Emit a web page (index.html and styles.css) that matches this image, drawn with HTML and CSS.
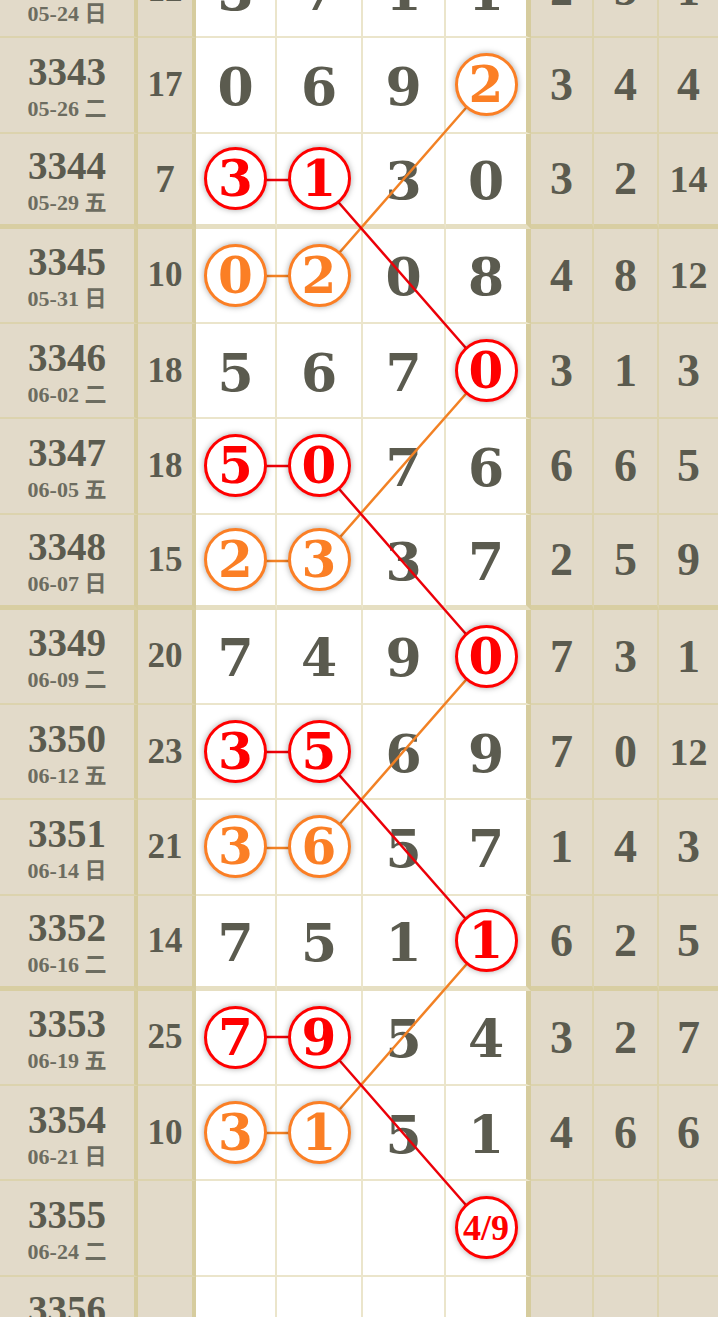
FILE: index.html
```html
<!DOCTYPE html>
<html lang="zh-CN">
<head>
  <meta charset="UTF-8" />
  <meta name="viewport" content="width=device-width, initial-scale=1.0"/>
  <title>走势图</title>
  <link rel="stylesheet" href="styles.css">
</head>
<body>
<div class="chart">
  <div class="row">
    <div class="issue"><b>3342</b><span>05-24 日</span></div>
    <div class="sum">12</div>
    <div class="d">3</div><div class="d">7</div><div class="d">1</div><div class="d">1</div>
    <div class="r">2</div><div class="r">3</div><div class="r">1</div>
  </div>
  <div class="row">
    <div class="issue"><b>3343</b><span>05-26 二</span></div>
    <div class="sum">17</div>
    <div class="d">0</div><div class="d">6</div><div class="d">9</div><div class="d"><i class="ball org">2</i></div>
    <div class="r">3</div><div class="r">4</div><div class="r">4</div>
  </div>
  <div class="row sep">
    <div class="issue"><b>3344</b><span>05-29 五</span></div>
    <div class="sum one">7</div>
    <div class="d"><i class="ball red">3</i></div><div class="d"><i class="ball red">1</i></div><div class="d">3</div><div class="d">0</div>
    <div class="r">3</div><div class="r">2</div><div class="r two">14</div>
  </div>
  <div class="row">
    <div class="issue"><b>3345</b><span>05-31 日</span></div>
    <div class="sum">10</div>
    <div class="d"><i class="ball org">0</i></div><div class="d"><i class="ball org">2</i></div><div class="d">0</div><div class="d">8</div>
    <div class="r">4</div><div class="r">8</div><div class="r two">12</div>
  </div>
  <div class="row">
    <div class="issue"><b>3346</b><span>06-02 二</span></div>
    <div class="sum">18</div>
    <div class="d">5</div><div class="d">6</div><div class="d">7</div><div class="d"><i class="ball red">0</i></div>
    <div class="r">3</div><div class="r">1</div><div class="r">3</div>
  </div>
  <div class="row">
    <div class="issue"><b>3347</b><span>06-05 五</span></div>
    <div class="sum">18</div>
    <div class="d"><i class="ball red">5</i></div><div class="d"><i class="ball red">0</i></div><div class="d">7</div><div class="d">6</div>
    <div class="r">6</div><div class="r">6</div><div class="r">5</div>
  </div>
  <div class="row sep">
    <div class="issue"><b>3348</b><span>06-07 日</span></div>
    <div class="sum">15</div>
    <div class="d"><i class="ball org">2</i></div><div class="d"><i class="ball org">3</i></div><div class="d">3</div><div class="d">7</div>
    <div class="r">2</div><div class="r">5</div><div class="r">9</div>
  </div>
  <div class="row">
    <div class="issue"><b>3349</b><span>06-09 二</span></div>
    <div class="sum">20</div>
    <div class="d">7</div><div class="d">4</div><div class="d">9</div><div class="d"><i class="ball red">0</i></div>
    <div class="r">7</div><div class="r">3</div><div class="r">1</div>
  </div>
  <div class="row">
    <div class="issue"><b>3350</b><span>06-12 五</span></div>
    <div class="sum">23</div>
    <div class="d"><i class="ball red">3</i></div><div class="d"><i class="ball red">5</i></div><div class="d">6</div><div class="d">9</div>
    <div class="r">7</div><div class="r">0</div><div class="r two">12</div>
  </div>
  <div class="row">
    <div class="issue"><b>3351</b><span>06-14 日</span></div>
    <div class="sum">21</div>
    <div class="d"><i class="ball org">3</i></div><div class="d"><i class="ball org">6</i></div><div class="d">5</div><div class="d">7</div>
    <div class="r">1</div><div class="r">4</div><div class="r">3</div>
  </div>
  <div class="row sep">
    <div class="issue"><b>3352</b><span>06-16 二</span></div>
    <div class="sum">14</div>
    <div class="d">7</div><div class="d">5</div><div class="d">1</div><div class="d"><i class="ball red">1</i></div>
    <div class="r">6</div><div class="r">2</div><div class="r">5</div>
  </div>
  <div class="row">
    <div class="issue"><b>3353</b><span>06-19 五</span></div>
    <div class="sum">25</div>
    <div class="d"><i class="ball red">7</i></div><div class="d"><i class="ball red">9</i></div><div class="d">5</div><div class="d">4</div>
    <div class="r">3</div><div class="r">2</div><div class="r">7</div>
  </div>
  <div class="row">
    <div class="issue"><b>3354</b><span>06-21 日</span></div>
    <div class="sum">10</div>
    <div class="d"><i class="ball org">3</i></div><div class="d"><i class="ball org">1</i></div><div class="d">5</div><div class="d">1</div>
    <div class="r">4</div><div class="r">6</div><div class="r">6</div>
  </div>
  <div class="row">
    <div class="issue"><b>3355</b><span>06-24 二</span></div>
    <div class="sum"></div>
    <div class="d"></div><div class="d"></div><div class="d"></div><div class="d"><i class="ball red small">4/9</i></div>
    <div class="r"></div><div class="r"></div><div class="r"></div>
  </div>
  <div class="row">
    <div class="issue"><b>3356</b><span>06-26 五</span></div>
    <div class="sum"></div>
    <div class="d"></div><div class="d"></div><div class="d"></div><div class="d"></div>
    <div class="r"></div><div class="r"></div><div class="r"></div>
  </div>

  <!-- connecting lines, drawn between the ball centres -->
  <svg class="lines" width="718" height="1428" viewBox="0 0 718 1428">
    <g stroke="#f28124" stroke-width="2.5" fill="none">
      <line x1="486" y1="142" x2="319" y2="333"/>
      <line x1="486" y1="428" x2="319" y2="618"/>
      <line x1="486" y1="714" x2="319" y2="905"/>
      <line x1="486" y1="999" x2="319" y2="1190"/>
      <line x1="235.5" y1="333" x2="319" y2="333"/>
      <line x1="235.5" y1="618" x2="319" y2="618"/>
      <line x1="235.5" y1="905" x2="319" y2="905"/>
      <line x1="235.5" y1="1190" x2="319" y2="1190"/>
    </g>
    <g stroke="#ec0008" stroke-width="2.5" fill="none">
      <line x1="319" y1="237" x2="486" y2="428"/>
      <line x1="319" y1="523" x2="486" y2="714"/>
      <line x1="319" y1="809" x2="486" y2="999"/>
      <line x1="319" y1="1094" x2="486" y2="1285"/>
      <line x1="235.5" y1="237" x2="319" y2="237"/>
      <line x1="235.5" y1="523" x2="319" y2="523"/>
      <line x1="235.5" y1="809" x2="319" y2="809"/>
      <line x1="235.5" y1="1094" x2="319" y2="1094"/>
    </g>
  </svg>
</div>
</body>
</html>
```

FILE: styles.css
```css
html, body { margin: 0; overflow: hidden; background: #fff; }
body { font-family: "Liberation Serif", "Noto Sans CJK SC", serif; font-weight: bold; color: #5b5b4f; }

.chart { position: relative; width: 718px; margin-top: -57px; }
.row { display: grid; grid-template-columns: 138px 58px 81px 86px 83px 85px 63px 65px 59px; height: 95.25px; }
.row > div { display: flex; align-items: center; justify-content: center; box-sizing: border-box; border-bottom: 2px solid #dcd3ae; border-right: 2px solid #dcd3ae; }
.row.sep > div { border-bottom-width: 5px; border-bottom-color: #d8cea2; }

.issue, .sum, .r { background: #e2dac9; }
.issue { flex-direction: column; border-right: 4px solid #d6cc9e !important; }
.issue b { font-size: 39px; line-height: 45px; }
.issue span { font-size: 22px; line-height: 24px; margin-top: 3px; color: #6c6c60; }
.sum { font-size: 35px; border-right: 4px solid #d6cc9e !important; }
.sum.one { font-size: 39px; }

.d { background: #fff; font-family: "DejaVu Serif", serif; font-size: 52px; padding-top: 3px; border-bottom-color: #ebe5cb !important; border-right-color: #ebe5cb !important; }
.row.sep > .d { border-bottom-color: #e6dfc2 !important; }
.d:nth-child(6) { border-right: 5px solid #d6cc9e !important; }

.r { font-size: 46px; }
.r.two { font-size: 38px; }
.r:last-child { border-right: none !important; }

.ball { position: relative; z-index: 2; width: 63px; height: 63px; box-sizing: border-box; border-radius: 50%; border: 3px solid; background: #fff; display: flex; align-items: center; justify-content: center; font-style: normal; font-size: 50px; margin-top: -3px; box-shadow: 0 0 6px rgba(0,0,0,0.35); }
.ball.red { color: #f00; border-color: #f00; }
.ball.org { color: #fb7f25; border-color: #fb7f25; }
.ball.small { font-family: "Liberation Serif", serif; font-size: 36px; }

.lines { position: absolute; left: 0; top: 0; z-index: 1; pointer-events: none; }
```
